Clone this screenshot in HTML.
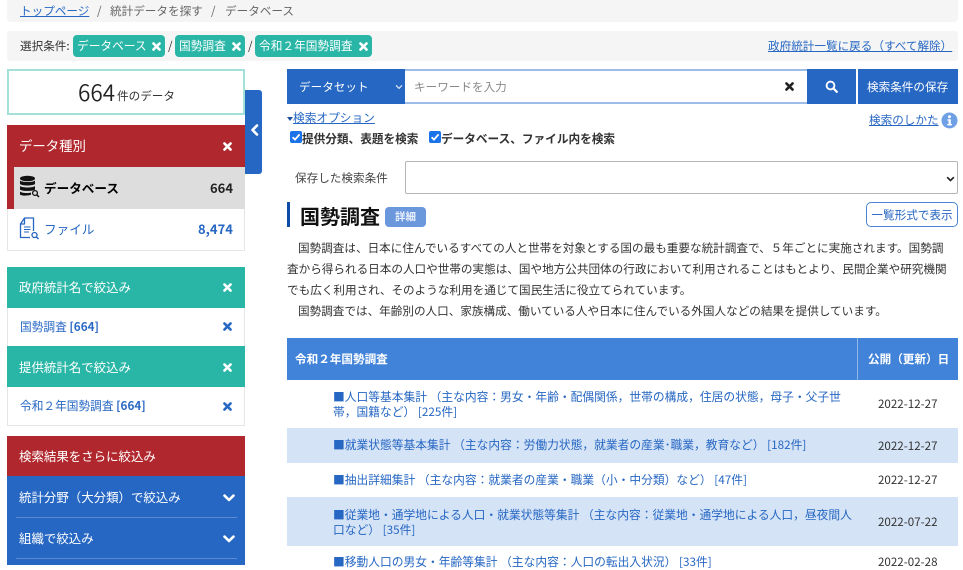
<!DOCTYPE html>
<html lang="ja">
<head>
<meta charset="utf-8">
<style>
html,body{margin:0;padding:0;background:#fff;}
body{width:963px;height:565px;overflow:hidden;position:relative;font-family:"Liberation Sans","Noto Sans CJK JP",sans-serif;font-size:11.6px;color:#333;}
.a{position:absolute;white-space:nowrap;}
.bx{position:absolute;box-sizing:border-box;}
.t{position:absolute;white-space:nowrap;line-height:16px;font-family:"Noto Sans CJK JP",sans-serif;}
a,.lk{color:#2667c3;text-decoration:underline;}
.chip{position:absolute;top:35px;height:22px;background:#29b6a6;border-radius:4px;color:#fff;line-height:22px;font-family:"Noto Sans CJK JP",sans-serif;font-size:11.7px;padding-left:4px;box-sizing:border-box;white-space:nowrap;}
svg{position:absolute;display:block;}
.w{color:#fff;}
.s{font-size:12.45px;}
.row{position:absolute;left:287px;width:671px;}
.rl{position:absolute;left:333px;color:#2667c3;font-family:"Noto Sans CJK JP",sans-serif;font-size:11.75px;line-height:14.5px;white-space:nowrap;}
.rd{position:absolute;left:878px;font-family:"Noto Sans CJK JP",sans-serif;font-size:11.6px;line-height:16px;color:#333;white-space:nowrap;}
</style>
</head>
<body>
<svg width="0" height="0" style="position:absolute">
<defs>
<symbol id="x" viewBox="0 0 10 10"><path d="M1.6 1.6L8.4 8.4M8.4 1.6L1.6 8.4" stroke="currentColor" stroke-width="2.8" stroke-linecap="round" fill="none"/></symbol>
<symbol id="chev" viewBox="0 0 12 8"><path d="M1.5 1.6L6 6L10.5 1.6" stroke="currentColor" stroke-width="2.6" stroke-linecap="round" stroke-linejoin="round" fill="none"/></symbol>
</defs>
</svg>

<!-- breadcrumb -->
<div class="bx" style="left:7px;top:0;width:951px;height:22px;background:#f5f5f5;border-radius:0 0 4px 4px;"></div>
<div class="t" style="left:20px;top:3px;"><span class="lk">トップページ</span></div>
<div class="t" style="left:97px;top:3px;color:#666;">/</div>
<div class="t" style="left:110px;top:3px;color:#666;">統計データを探す</div>
<div class="t" style="left:211px;top:3px;color:#666;">/</div>
<div class="t" style="left:225px;top:3px;color:#666;">データベース</div>

<!-- selection bar -->
<div class="bx" style="left:7px;top:31px;width:951px;height:30px;background:#f5f5f5;border-radius:3px;"></div>
<div class="t" style="left:20px;top:38px;color:#333;">選択条件:</div>
<div class="chip" style="left:73px;width:92px;">データベース<svg style="left:79px;top:7px;color:#fff;" width="9" height="9"><use href="#x"/></svg></div>
<div class="t" style="left:168px;top:38px;">/</div>
<div class="chip" style="left:175px;width:70px;">国勢調査<svg style="left:57px;top:7px;color:#fff;" width="9" height="9"><use href="#x"/></svg></div>
<div class="t" style="left:248px;top:38px;">/</div>
<div class="chip" style="left:255px;width:117px;">令和２年国勢調査<svg style="left:104px;top:7px;color:#fff;" width="9" height="9"><use href="#x"/></svg></div>
<div class="t lk" style="left:768px;top:38px;">政府統計一覧に戻る（すべて解除）</div>

<!-- count -->
<div class="bx" style="left:7px;top:69px;width:238px;height:46px;border:2px solid #a3e0d9;background:#fff;"></div>
<div class="t" style="left:78px;top:80px;font-size:22.5px;line-height:24px;color:#222;font-family:'Noto Sans CJK JP',sans-serif;font-weight:350;">664</div>
<div class="t" style="left:117px;top:88px;font-size:11.6px;color:#333;">件のデータ</div>

<!-- collapse tab -->
<div class="bx" style="left:245px;top:90px;width:17px;height:84px;background:#2667c3;border-radius:0 3px 3px 0;"></div>
<svg style="left:250px;top:124px;" width="9" height="12" viewBox="0 0 9 12"><path d="M7 1.5L2.5 6L7 10.5" stroke="#fff" stroke-width="2.6" stroke-linecap="round" stroke-linejoin="round" fill="none"/></svg>

<!-- data type -->
<div class="bx" style="left:7px;top:125px;width:238px;height:84px;background:#b0282e;"></div>
<div class="t w" style="left:19px;top:137px;font-size:13.4px;">データ種別</div>
<svg style="left:223px;top:142px;color:#fff;" width="9" height="9"><use href="#x"/></svg>
<div class="bx" style="left:14px;top:167px;width:231px;height:42px;background:#dddddd;"></div>
<svg style="left:19px;top:175px;" width="21" height="24" viewBox="0 0 21 24">
<ellipse cx="8.5" cy="3.5" rx="7.5" ry="2.8" fill="#111"/>
<path d="M1 5.5C3 7.6 14 7.6 16 5.5V9C14 11 3 11 1 9Z" fill="#111"/>
<path d="M1 11C3 13 14 13 16 11V14.5C14 16.4 3 16.4 1 14.5Z" fill="#111"/>
<path d="M1 16.5C3 18.4 11 18.4 12 17.5V19.8C8 21 3 20.8 1 19.6Z" fill="#111"/>
<circle cx="16" cy="18" r="2.4" fill="none" stroke="#111" stroke-width="1.3"/><path d="M17.8 19.8L20 22" stroke="#111" stroke-width="1.5"/>
</svg>
<div class="t" style="left:44px;top:180px;font-weight:700;color:#000;font-size:12.6px;">データベース</div>
<div class="t" style="left:210px;top:180px;font-weight:700;color:#222;font-size:13px;">664</div>
<div class="bx" style="left:7px;top:209px;width:238px;height:42px;background:#fff;border:1px solid #e6e6e6;border-top:0;"></div>
<svg style="left:19px;top:217px;" width="21" height="24" viewBox="0 0 21 24">
<path d="M5.5 1H14.5V14M11 20.5H1.5V7L5.5 1V7H1.5" fill="none" stroke="#2667c3" stroke-width="1.3" stroke-linejoin="round"/>
<path d="M5 10H11.5M5 12.5H11.5M5 15H10" stroke="#2667c3" stroke-width="1"/>
<circle cx="15.5" cy="18" r="2.5" fill="none" stroke="#2667c3" stroke-width="1.3"/><path d="M17.3 19.8L19.5 22" stroke="#2667c3" stroke-width="1.5"/>
</svg>
<div class="t" style="left:44px;top:221px;color:#2667c3;font-size:12.6px;">ファイル</div>
<div class="t" style="left:198px;top:221px;font-weight:700;color:#2667c3;font-size:13px;">8,474</div>

<!-- government stat filter -->
<div class="bx" style="left:7px;top:267px;width:238px;height:41px;background:#29b6a6;"></div>
<div class="t w s" style="left:19px;top:279px;">政府統計名で絞込み</div>
<svg style="left:223px;top:283px;color:#fff;" width="9" height="9"><use href="#x"/></svg>
<div class="bx" style="left:7px;top:308px;width:238px;height:38px;background:#fff;border:1px solid #e6e6e6;border-width:0 1px;"></div>
<div class="t" style="left:20px;top:319px;color:#2667c3;font-size:11.7px;">国勢調査 <b>[664]</b></div>
<svg style="left:223px;top:322px;color:#2667c3;" width="9" height="9"><use href="#x"/></svg>
<div class="bx" style="left:7px;top:346px;width:238px;height:41px;background:#29b6a6;"></div>
<div class="t w s" style="left:19px;top:359px;">提供統計名で絞込み</div>
<svg style="left:223px;top:363px;color:#fff;" width="9" height="9"><use href="#x"/></svg>
<div class="bx" style="left:7px;top:387px;width:238px;height:39px;background:#fff;border:1px solid #e6e6e6;border-top:0;"></div>
<div class="t" style="left:20px;top:398px;color:#2667c3;font-size:11.7px;">令和２年国勢調査 <b>[664]</b></div>
<svg style="left:223px;top:402px;color:#2667c3;" width="9" height="9"><use href="#x"/></svg>

<!-- narrow -->
<div class="bx" style="left:7px;top:436px;width:238px;height:40px;background:#b0282e;"></div>
<div class="t w s" style="left:19px;top:448px;">検索結果をさらに絞込み</div>
<div class="bx" style="left:7px;top:476px;width:238px;height:89px;background:#2667c3;"></div>
<div class="t w s" style="left:19px;top:489px;">統計分野（大分類）で絞込み</div>
<svg style="left:223px;top:494px;color:#fff;" width="12" height="8"><use href="#chev"/></svg>
<div class="bx" style="left:16px;top:517px;width:221px;height:1px;background:#5c8ad2;"></div>
<div class="t w s" style="left:19px;top:530px;">組織で絞込み</div>
<svg style="left:223px;top:535px;color:#fff;" width="12" height="8"><use href="#chev"/></svg>
<div class="bx" style="left:16px;top:558px;width:221px;height:1px;background:#5c8ad2;"></div>

<!-- search bar -->
<div class="bx" style="left:287px;top:69px;width:118px;height:35px;background:#2667c3;"></div>
<div class="t w" style="left:299px;top:79px;">データセット</div>
<svg style="left:395px;top:84px;color:#cfdcf2;" width="8" height="6" viewBox="0 0 12 8"><path d="M1.5 1.6L6 6L10.5 1.6" stroke="currentColor" stroke-width="2" fill="none"/></svg>
<div class="bx" style="left:405px;top:69px;width:402px;height:35px;border:solid #9dbce8;border-width:2px 0;background:#fff;"></div>
<div class="t" style="left:414px;top:79px;color:#888;">キーワードを入力</div>
<svg style="left:785px;top:82px;color:#222;" width="9" height="9"><use href="#x"/></svg>
<div class="bx" style="left:807px;top:69px;width:49px;height:35px;background:#2667c3;"></div>
<svg style="left:825px;top:80px;" width="13" height="13" viewBox="0 0 13 13"><circle cx="5.5" cy="5.5" r="3.9" fill="none" stroke="#fff" stroke-width="1.9"/><path d="M8.4 8.4L11.8 11.8" stroke="#fff" stroke-width="2.2" stroke-linecap="round"/></svg>
<div class="bx" style="left:858px;top:69px;width:100px;height:35px;background:#2667c3;"></div>
<div class="t w" style="left:867px;top:79px;">検索条件の保存</div>

<!-- options -->
<svg style="left:287px;top:117px;" width="6" height="4"><path d="M0 0H6L3 4Z" fill="#1f4f9f"/></svg>
<div class="t lk" style="left:293px;top:110px;font-size:11.7px;">検索オプション</div>
<div class="t lk" style="left:869px;top:112px;">検索のしかた</div>
<svg style="left:941px;top:112px;" width="17" height="17" viewBox="0 0 17 17"><circle cx="8.5" cy="8.5" r="8" fill="#6fa0e6"/><circle cx="8.5" cy="4.7" r="1.5" fill="#fff"/><path d="M6.5 7.3H9.8V12H11V13.4H6.2V12H7.6V8.7H6.5Z" fill="#fff"/></svg>
<svg style="left:290px;top:131px;" width="12" height="12" viewBox="0 0 12 12"><rect width="12" height="12" rx="2" fill="#1a73e8"/><path d="M2.6 6.2L5 8.6L9.6 3.4" stroke="#fff" stroke-width="1.8" fill="none"/></svg>
<div class="t" style="left:302px;top:131px;font-weight:700;color:#333;font-size:11.65px;">提供分類、表題を検索</div>
<svg style="left:429px;top:131px;" width="12" height="12" viewBox="0 0 12 12"><rect width="12" height="12" rx="2" fill="#1a73e8"/><path d="M2.6 6.2L5 8.6L9.6 3.4" stroke="#fff" stroke-width="1.8" fill="none"/></svg>
<div class="t" style="left:441px;top:131px;font-weight:700;color:#333;font-size:11.65px;">データベース、ファイル内を検索</div>
<div class="t" style="left:295px;top:170px;color:#444;">保存した検索条件</div>
<div class="bx" style="left:405px;top:161px;width:553px;height:33px;border:1px solid #b5b5b5;border-radius:2px;background:#fff;"></div>
<svg style="left:946px;top:176px;" width="9" height="6" viewBox="0 0 12 8"><path d="M1.5 1.6L6 6L10.5 1.6" stroke="#222" stroke-width="2.2" fill="none"/></svg>

<!-- heading -->
<div class="bx" style="left:287px;top:202px;width:3px;height:25px;background:#0d4ba6;"></div>
<div class="t" style="left:300px;top:203px;font-size:20px;line-height:25px;font-weight:700;color:#111;">国勢調査</div>
<div class="t" style="left:385px;top:207px;width:41px;height:20px;background:#6b97dd;border-radius:4px;color:#e9f0fb;font-size:10.5px;line-height:20px;text-align:center;font-weight:700;">詳細</div>
<div class="t" style="left:866px;top:202px;width:92px;height:25px;box-sizing:border-box;border:1px solid #4d84d3;border-radius:5px;color:#2667c3;line-height:24px;text-align:center;">一覧形式で表示</div>

<!-- paragraph -->
<div class="t" style="left:298px;top:240px;color:#333;">国勢調査は、日本に住んでいるすべての人と世帯を対象とする国の最も重要な統計調査で、５年ごとに実施されます。国勢調</div>
<div class="t" style="left:287px;top:261px;color:#333;">査から得られる日本の人口や世帯の実態は、国や地方公共団体の行政において利用されることはもとより、民間企業や研究機関</div>
<div class="t" style="left:287px;top:282px;color:#333;">でも広く利用され、そのような利用を通じて国民生活に役立てられています。</div>
<div class="t" style="left:298px;top:303px;color:#333;">国勢調査では、年齢別の人口、家族構成、働いている人や日本に住んでいる外国人などの結果を提供しています。</div>

<!-- table -->
<div class="row" style="top:338px;height:42px;background:#4083d8;"></div>
<div class="bx" style="left:857px;top:338px;width:1px;height:42px;background:#8fb6ea;"></div>
<div class="t w" style="left:295px;top:351px;font-weight:700;font-size:11.6px;">令和２年国勢調査</div>
<div class="t w" style="left:868px;top:351px;font-weight:700;font-size:11.6px;">公開（更新）日</div>

<div class="rl" style="top:390px;">■人口等基本集計 （主な内容：男女・年齢・配偶関係，世帯の構成，住居の状態，母子・父子世<br>帯，国籍など） [225件]</div>
<div class="rd" style="top:396px;">2022-12-27</div>

<div class="row" style="top:428px;height:35px;background:#d5e3f6;"></div>
<div class="rl" style="top:438px;">■就業状態等基本集計 （主な内容：労働力状態，就業者の産業･職業，教育など） [182件]</div>
<div class="rd" style="top:438px;">2022-12-27</div>

<div class="rl" style="top:473px;">■抽出詳細集計 （主な内容：就業者の産業・職業（小・中分類）など） [47件]</div>
<div class="rd" style="top:472px;">2022-12-27</div>

<div class="row" style="top:497px;height:49px;background:#d5e3f6;"></div>
<div class="rl" style="top:508px;">■従業地・通学地による人口・就業状態等集計 （主な内容：従業地・通学地による人口，昼夜間人<br>口など） [35件]</div>
<div class="rd" style="top:514px;">2022-07-22</div>

<div class="rl" style="top:555px;">■移動人口の男女・年齢等集計 （主な内容：人口の転出入状況） [33件]</div>
<div class="rd" style="top:554px;">2022-02-28</div>
</body>
</html>
